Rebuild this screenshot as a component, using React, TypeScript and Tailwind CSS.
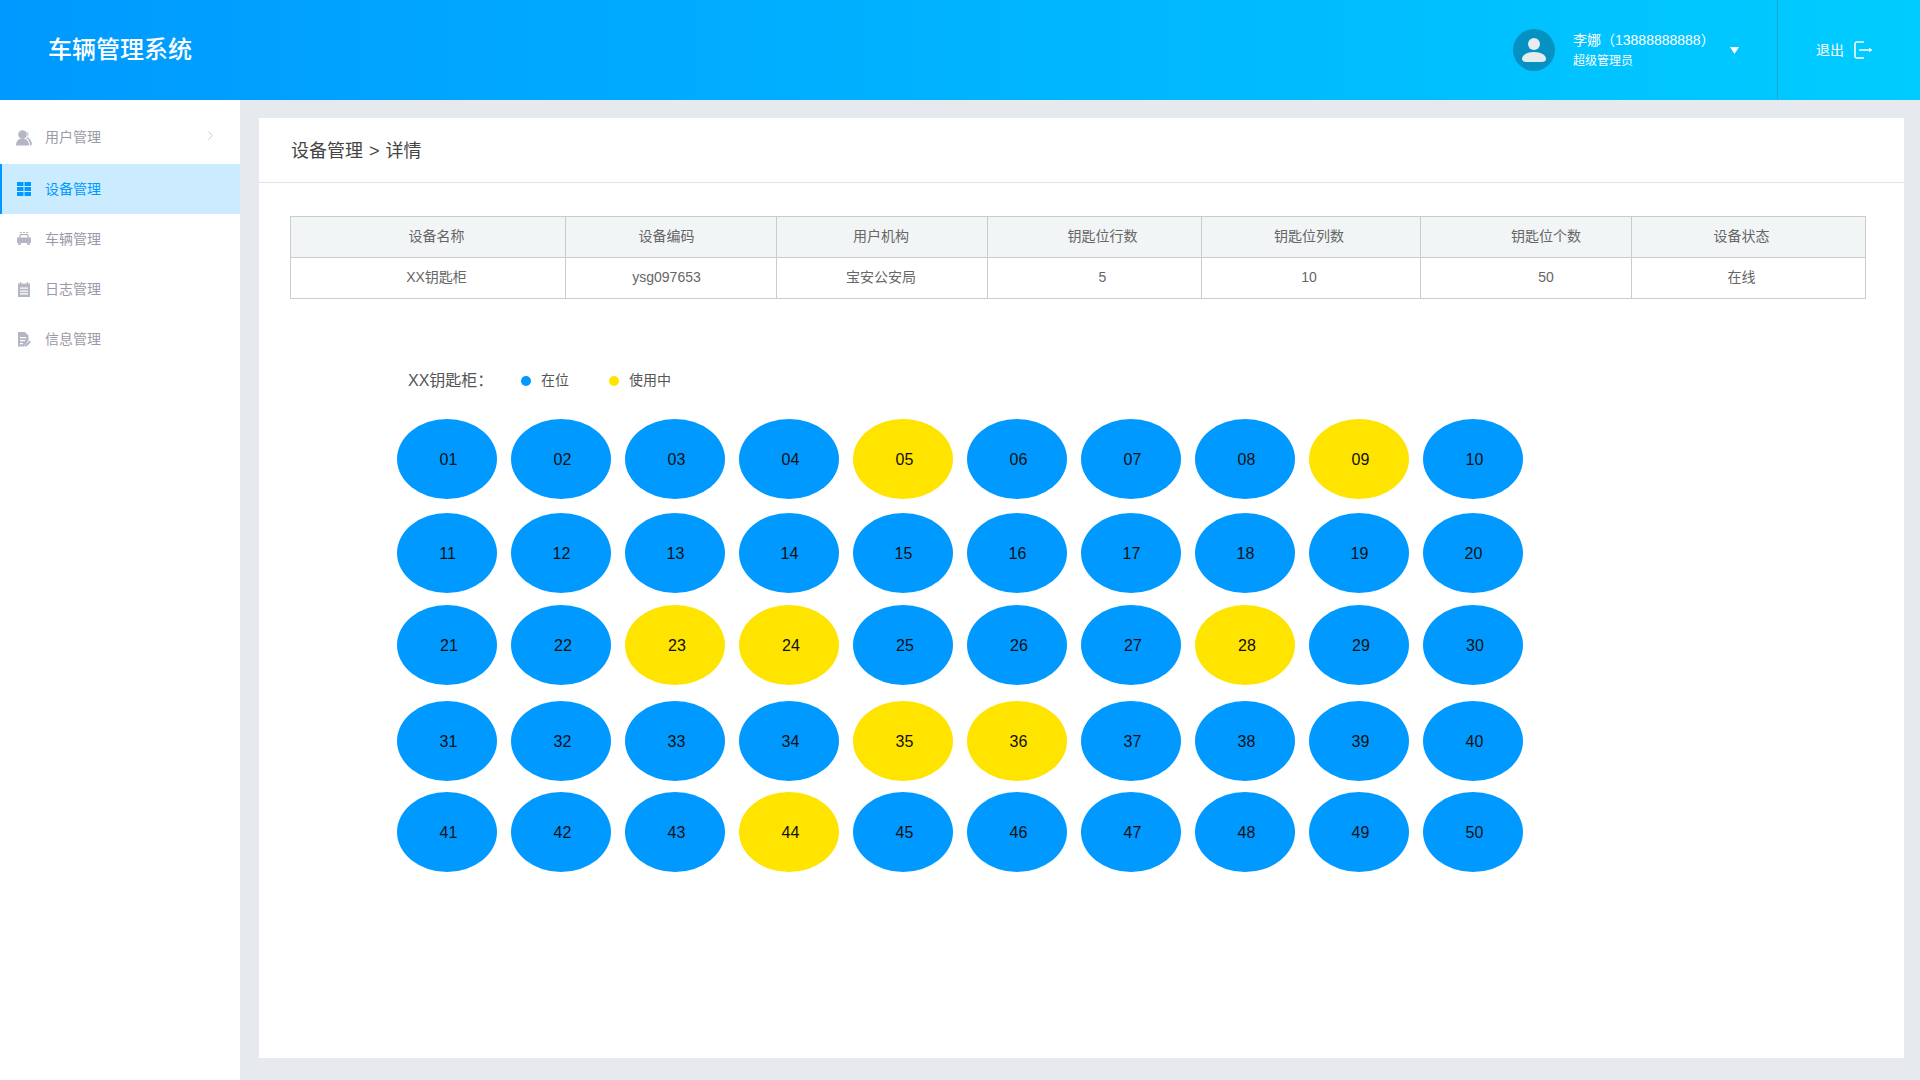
import { ChevronRight } from "lucide-react"

const menu = [
  { label: "用户管理", icon: "user", arrow: true, shift: "pb-[3px]" },
  { label: "设备管理", icon: "grid", active: true, shift: "" },
  { label: "车辆管理", icon: "car", shift: "" },
  { label: "日志管理", icon: "log", shift: "" },
  { label: "信息管理", icon: "info", shift: "" },
]

const columns = [
  { head: "设备名称", value: "XX钥匙柜", width: "w-[275px]", offset: "pl-[17px]" },
  { head: "设备编码", value: "ysg097653", width: "w-[211px]", offset: "pr-[9px]" },
  { head: "用户机构", value: "宝安公安局", width: "w-[211px]", offset: "pr-[2px]" },
  { head: "钥匙位行数", value: "5", width: "w-[214px]", offset: "pl-[16px]" },
  { head: "钥匙位列数", value: "10", width: "w-[219px]", offset: "pr-[4px]" },
  { head: "钥匙位个数", value: "50", width: "w-[211px]", offset: "pl-[40px]" },
  { head: "设备状态", value: "在线", width: "w-[234px]", offset: "pr-[14px]" },
]

const inUse = [5, 9, 23, 24, 28, 35, 36, 44]

const rows = [
  { start: 1, gap: "mb-[14px]", nudge: "pl-[3px]" },
  { start: 11, gap: "mb-[12px]", nudge: "pl-[1px]" },
  { start: 21, gap: "mb-[16px]", nudge: "pl-[4px]" },
  { start: 31, gap: "mb-[11px]", nudge: "pl-[3px]" },
  { start: 41, gap: "", nudge: "pl-[3px]" },
]

function MenuIcon({ name, color }: { name: string; color: string }) {
  if (name === "user") {
    return (
      <svg width="16" height="16" viewBox="0 0 16 16" fill={color}>
        <circle cx="6.500" cy="4.500" r="4.300" />
        <path d="M0 15.500c0-4.500 2.500-7 6.500-7s6.500 2.500 6.500 7z" />
        <path d="M10.500 1.200c2.400.8 2.600 4.600.6 6 2.700 1 4.600 3.500 4.900 6.800l-1 1.500h-1c0-3-1.300-6-3.800-7.400 1.800-1.600 1.700-4.600.3-6.900z" />
      </svg>
    )
  }
  if (name === "grid") {
    return (
      <svg width="14" height="14" viewBox="0 0 14 14" fill={color}>
        <rect x="0" y="0" width="6.500" height="4" />
        <rect x="7.500" y="0" width="6.500" height="4" />
        <rect x="0" y="5" width="6.500" height="4" />
        <rect x="7.500" y="5" width="6.500" height="4" />
        <rect x="0" y="10" width="6.500" height="4" />
        <rect x="7.500" y="10" width="6.500" height="4" />
      </svg>
    )
  }
  if (name === "car") {
    return (
      <svg width="14" height="14" viewBox="0 0 14 14" fill={color}>
        <rect x="3" y="0" width="2" height="1" />
        <rect x="6" y="0" width="2" height="1" />
        <rect x="9" y="0" width="2" height="1" />
        <path
          d="M3 2h8l1.200 3.500H14V11h-1.200v2h-2.600v-2H3.800v2H1.200v-2H0V5.500h1.800zm.9 1.300-.8 2.200h7.800l-.8-2.200z"
          fillRule="evenodd"
        />
      </svg>
    )
  }
  if (name === "log") {
    return (
      <svg width="14" height="15" viewBox="0 0 14 15" fill={color}>
        <path
          d="M1 1.500h2V0h1.200v1.500h5.600V0H11v1.500h2V15H1zM3 5.500v1.200h8V5.500zm0 3v1.200h8V8.500zm0 2.800v1.200h8v-1.200z"
          fillRule="evenodd"
        />
      </svg>
    )
  }
  return (
    <svg width="15" height="15" viewBox="0 0 15 15" fill={color}>
      <path
        d="M1 0h7l3.500 3.500V8L7 14.500H1zM3 5v1.300h6V5zm0 3v1.300h5V8zm0 3v1.300h3V11z"
        fillRule="evenodd"
      />
      <path d="M12.500 8.500 14 10l-4.500 4.500H8V13z" />
    </svg>
  )
}

export default function App() {
  return (
    <div className="flex h-screen flex-col bg-[#e6e9ee] font-['Liberation_Sans','Noto_Sans_CJK_SC',sans-serif]">
      {/* Header */}
      <header className="flex h-[100px] shrink-0 items-center bg-gradient-to-r from-[#0099ff] to-[#00ccff] text-white">
        <h1 className="ml-[48px] text-[24px] font-medium">车辆管理系统</h1>
        <div className="ml-auto flex items-center">
          <div className="flex h-[42px] w-[42px] items-center justify-center rounded-full bg-[#0592c2]">
            <svg width="24" height="26" viewBox="0 0 24 26" fill="#e6ebee">
              <circle cx="12" cy="7" r="6" />
              <path d="M0 22c0-4 5-7 12-7s12 3 12 7c0 2-2 3-4 3H4c-2 0-4-1-4-3z" />
            </svg>
          </div>
          <div className="ml-[18px] w-[158px]">
            <div className="text-[14px] leading-[20px] whitespace-nowrap">李娜（13888888888）</div>
            <div className="mt-[2px] text-[12px] leading-[18px]">超级管理员</div>
          </div>
          <svg className="ml-[-1px]" width="9" height="7" viewBox="0 0 9 7" fill="#fff">
            <path d="M0 0h9L4.500 7z" />
          </svg>
          <div className="ml-[38px] flex h-[100px] w-[143px] items-center border-l border-[#1aa9c9] pl-[38px]">
            <span className="text-[14px]">退出</span>
            <svg className="ml-[10px]" width="19" height="18" viewBox="0 0 19 18" fill="none" stroke="#fff" strokeWidth="1.500">
              <path d="M10 1H3a2 2 0 0 0-2 2v12a2 2 0 0 0 2 2h7" />
              <path d="M5 9h11" />
              <path d="M15 6.800 18.500 9 15 11.200z" fill="#fff" stroke="none" />
            </svg>
          </div>
        </div>
      </header>

      <div className="flex min-h-0 flex-1">
        {/* Sidebar */}
        <aside className="w-[240px] shrink-0 bg-white pt-[14px]">
          {menu.map((item) => (
            <div
              key={item.label}
              className={
                item.active
                  ? "flex h-[50px] items-center border-l-2 border-[#0099ff] bg-[#cbecff] text-[#0099ff]"
                  : "flex h-[50px] items-center border-l-2 border-transparent text-[#9a9aa6]"
              }
            >
              <span className={`flex w-[43px] justify-center pl-[1px] ${item.shift}`}>
                <MenuIcon name={item.icon} color={item.active ? "#0099ff" : "#b4b6c6"} />
              </span>
              <span className={`text-[14px] ${item.shift}`}>{item.label}</span>
              {item.arrow && (
                <ChevronRight className="mb-[7px] ml-[102px] text-[#a5a8b8]" size={15} strokeWidth={1} />
              )}
            </div>
          ))}
        </aside>

        {/* Main card */}
        <main className="mt-[18px] mb-[22px] ml-[19px] w-[1645px] bg-white">
          <div className="flex h-[65px] items-center border-b border-[#e2e4e6] pt-[2px] pl-[32px] text-[18px] text-[#444]">
            设备管理<span className="mx-[6px]">&gt;</span>详情
          </div>

          <table className="mt-[33px] ml-[31px] w-[1576px] table-fixed border-collapse text-center text-[14px] text-[#666]">
            <thead>
              <tr className="h-[41px] bg-[#f2f5f6]">
                {columns.map((col) => (
                  <th key={col.head} className={`${col.width} ${col.offset} border border-[#ccc] pb-[1px] font-normal`}>
                    {col.head}
                  </th>
                ))}
              </tr>
            </thead>
            <tbody>
              <tr className="h-[41px]">
                {columns.map((col) => (
                  <td key={col.head} className={`${col.offset} border border-[#ccc] pb-[1px]`}>
                    {col.value}
                  </td>
                ))}
              </tr>
            </tbody>
          </table>

          <div className="mt-[69px] ml-[149px] flex h-[24px] items-center pt-[1px] text-[14px] text-[#555]">
            <span className="w-[113px] text-[16px]">XX钥匙柜：</span>
            <span className="h-[10px] w-[10px] rounded-full bg-[#0099ff]" />
            <span className="ml-[10px]">在位</span>
            <span className="ml-[40px] h-[10px] w-[10px] rounded-full bg-[#ffe400]" />
            <span className="ml-[10px]">使用中</span>
          </div>

          <div className="mt-[27px] ml-[138px]">
            {rows.map((row) => (
              <div key={row.start} className={`flex gap-[14px] ${row.gap}`}>
                {Array.from({ length: 10 }, (_, i) => row.start + i).map((n) => (
                  <div
                    key={n}
                    className={
                      inUse.includes(n)
                        ? `flex h-[80px] w-[100px] items-center justify-center rounded-[50%] bg-[#ffe400] pt-[1px] text-[16px] text-[#111] ${row.nudge}`
                        : `flex h-[80px] w-[100px] items-center justify-center rounded-[50%] bg-[#0099ff] pt-[1px] text-[16px] text-[#111] ${row.nudge}`
                    }
                  >
                    {String(n).padStart(2, "0")}
                  </div>
                ))}
              </div>
            ))}
          </div>
        </main>
      </div>
    </div>
  )
}
